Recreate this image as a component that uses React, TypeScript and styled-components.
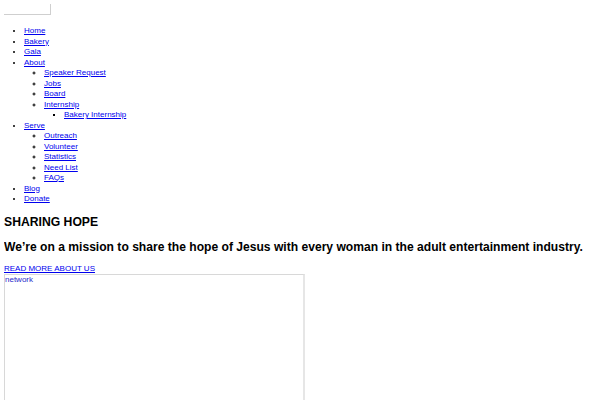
import React from "react";
import styled, { createGlobalStyle } from "styled-components";

const Global = createGlobalStyle`
  html, body { margin: 0; padding: 0; background: #fff; }
  body {
    margin: 4px;
    font-family: "Liberation Sans", Arial, sans-serif;
    font-size: 8px;
    line-height: 10.5px;
    color: #000;
  }
`;

const Search = styled.input`
  display: block;
  box-sizing: border-box;
  width: 48px;
  height: 12px;
  margin: -1px 0 0 -1px;
  border: 1px solid #cfcfcf;
  padding: 0;
  background: #fff;
`;

const List = styled.ul<{ $level: number }>`
  margin: ${(p) => (p.$level === 1 ? "11px 0 10px" : "0")};
  padding: 0 0 0 20px;
  list-style-type: ${(p) => (p.$level === 1 ? "disc" : p.$level === 2 ? "circle" : "square")};
`;

const Item = styled.li`
  line-height: 10.5px;
`;

const Link = styled.a`
  color: #0000ee;
  text-decoration: underline;
`;

const Title = styled.h2`
  margin: 8px 0 0;
  font-size: 12.2px;
  line-height: 14px;
  font-weight: 700;
`;

const Mission = styled.h3`
  margin: 11px 0 0;
  font-size: 12.1px;
  line-height: 14px;
  font-weight: 700;
`;

const More = styled.a`
  display: block;
  margin-top: 10px;
  color: #0000ee;
  text-decoration: underline;
  font-size: 8px;
  line-height: 9px;
`;

const Frame = styled.div`
  box-sizing: border-box;
  width: 301px;
  height: 160px;
  margin-top: 1px;
  border: 1px solid #d8d8d8;
  border-right: 2px solid #e6e6e6;
  color: #2a2acc;
  font-size: 8px;
  line-height: 9px;
  padding: 0;
`;

type Node = { label: string; children?: Node[] };

const nav: Node[] = [
  { label: "Home" },
  { label: "Bakery" },
  { label: "Gala" },
  {
    label: "About",
    children: [
      { label: "Speaker Request" },
      { label: "Jobs" },
      { label: "Board" },
      { label: "Internship", children: [{ label: "Bakery Internship" }] },
    ],
  },
  {
    label: "Serve",
    children: [
      { label: "Outreach" },
      { label: "Volunteer" },
      { label: "Statistics" },
      { label: "Need List" },
      { label: "FAQs" },
    ],
  },
  { label: "Blog" },
  { label: "Donate" },
];

function Menu({ items, level }: { items: Node[]; level: number }) {
  return (
    <List $level={level}>
      {items.map((n) => (
        <Item key={n.label}>
          <Link href="#">{n.label}</Link>
          {n.children && <Menu items={n.children} level={level + 1} />}
        </Item>
      ))}
    </List>
  );
}

export default function App() {
  return (
    <>
      <Global />
      <Search type="text" />
      <Menu items={nav} level={1} />
      <Title>SHARING HOPE</Title>
      <Mission>We’re on a mission to share the hope of Jesus with every woman in the adult entertainment industry.</Mission>
      <More href="#">READ MORE ABOUT US</More>
      <Frame>network</Frame>
    </>
  );
}
